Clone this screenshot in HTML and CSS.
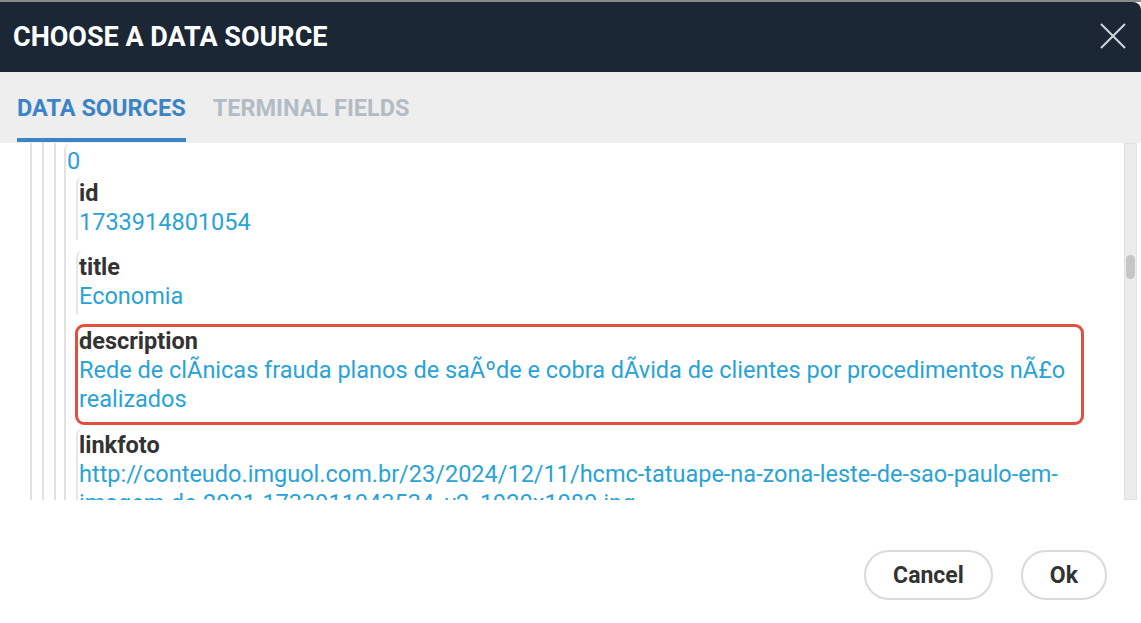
FILE: index.html
```html
<html>

<head>
    <link rel="stylesheet" href="styles.css">
    <title>Choose a data source</title>
</head>

<body>
    <div class="dialog">
        <div class="dlg-head">
            <h1>CHOOSE A DATA SOURCE</h1>
            <button class="close" title="Close">
                <svg width="26" height="26" viewBox="0 0 26 26">
                    <path d="M1 1 L25 25 M25 1 L1 25" stroke="#d3d7db" stroke-width="2" fill="none" />
                </svg>
            </button>
        </div>

        <div class="tabs">
            <span class="tab active">DATA SOURCES</span>
            <span class="tab">TERMINAL FIELDS</span>
        </div>

        <div class="dlg-body">
            <div class="tree">
                <div class="lvl">
                    <div class="lvl">
                        <div class="lvl last">
                            <div class="node">
                                <div class="val">0</div>

                                <div class="field">
                                    <div class="key">id</div>
                                    <div class="val">1733914801054</div>
                                </div>

                                <div class="field">
                                    <div class="key">title</div>
                                    <div class="val">Economia</div>
                                </div>

                                <div class="field hl">
                                    <div class="key">description</div>
                                    <div class="val">Rede de clÃnicas frauda planos de saÃºde e cobra dÃvida de clientes por procedimentos nÃ£o realizados</div>
                                </div>

                                <div class="field">
                                    <div class="key">linkfoto</div>
                                    <div class="val">http://conteudo.imguol.com.br/23/2024/12/11/hcmc-tatuape-na-zona-leste-de-sao-paulo-em-imagem-de-2021-1733911043534_v2_1920x1080.jpg</div>
                                </div>
                            </div>
                        </div>
                    </div>
                </div>
            </div>

            <div class="scrollbar">
                <div class="thumb"></div>
            </div>
        </div>

        <div class="dlg-foot">
            <button class="btn">Cancel</button>
            <button class="btn">Ok</button>
        </div>
    </div>
</body>

</html>
```

FILE: styles.css
```css
html,
body {
    margin: 0;
    padding: 0;
    background: #fff;
}

body {
    border-top: 2px solid #8a8a8a;
    font-family: Roboto, "Liberation Sans", sans-serif;
}

.dialog {
    width: 1141px;
    height: 621px;
    display: flex;
    flex-direction: column;
    overflow: hidden;
}

.dlg-head {
    height: 70px;
    background: #1b2735;
    border-top-right-radius: 8px;
    display: flex;
    align-items: center;
    justify-content: space-between;
    padding: 0 15px 0 13px;
    flex-shrink: 0;
}

.dlg-head h1 {
    margin: 0;
    color: #fff;
    font-size: 27px;
    font-weight: 700;
}

.close {
    background: none;
    border: 0;
    padding: 0;
    width: 26px;
    height: 26px;
    margin-top: -3px;
}

.tabs {
    height: 71px;
    background: #eeeeee;
    display: flex;
    gap: 27px;
    padding-left: 17px;
    flex-shrink: 0;
}

.tab {
    display: flex;
    align-items: center;
    font-size: 23.5px;
    font-weight: 700;
    color: #b3bcc4;
    border-bottom: 4px solid transparent;
    padding-top: 5px;
    margin-bottom: 1px;
}

.tab.active {
    color: #3b84c5;
    border-bottom-color: #3b84c5;
}

.dlg-body {
    height: 357px;
    display: flex;
    flex-shrink: 0;
}

.tree {
    flex: 1;
    overflow: hidden;
    padding: 0 40px 0 30px;
}

.lvl {
    border-left: 2px solid #e2e2e2;
    padding-left: 10px;
    height: 100%;
}

.lvl.last {
    padding-left: 8px;
}

.node {
    border-left: 2px solid #e2e2e2;
    border-top-left-radius: 8px;
    padding: 4px 0 0 1px;
    height: 100%;
}

.key,
.val {
    font-size: 23.5px;
    line-height: 29px;
}

.key {
    font-weight: 700;
    color: #333;
}

.val {
    color: #29a3d6;
}

.field {
    margin: 0 0 10px 9px;
    padding: 3px 0 3px 1px;
    border-left: 2px solid #e6e6e6;
    border-top-left-radius: 8px;
}

.field.hl {
    margin: 0 0 3px 8px;
    padding: 0 0 8px 1px;
    border: 3px solid #e2503d;
    border-radius: 9px;
}

.scrollbar {
    width: 11px;
    margin-right: 4px;
    background: #ececec;
    border: 1px solid #e2e2e2;
    padding-top: 111px;
}

.thumb {
    height: 24px;
    margin: 0 1px;
    border-radius: 5px;
    background: #c6c6c6;
}

.dlg-foot {
    flex: 1;
    display: flex;
    justify-content: flex-end;
    align-items: flex-start;
    gap: 28px;
    padding: 50px 34px 0 0;
}

.btn {
    height: 50px;
    padding: 0 27px;
    border: 2px solid #dadada;
    border-radius: 25px;
    background: #fff;
    font-family: Roboto, "Liberation Sans", sans-serif;
    font-size: 23px;
    font-weight: 700;
    color: #333;
}
```
